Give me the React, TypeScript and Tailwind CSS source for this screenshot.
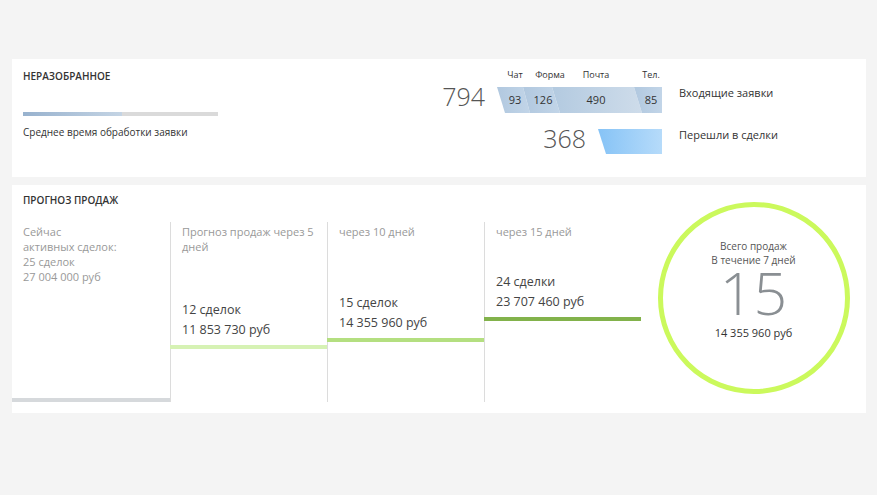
const columns = [
  {
    title: 'Прогноз продаж через 5 дней',
    deals: '12 сделок',
    sum: '11 853 730 руб',
    bar: 'bg-[#d6f2b4]',
    lift: 'h-[53px]'
  },
  {
    title: 'через 10 дней',
    deals: '15 сделок',
    sum: '14 355 960 руб',
    bar: 'bg-[#b4df80]',
    lift: 'h-[60px]'
  },
  {
    title: 'через 15 дней',
    deals: '24 сделки',
    sum: '23 707 460 руб',
    bar: 'bg-[#82b24b]',
    lift: 'h-[81px]'
  }
];

const channels = [
  { label: 'Чат', value: '93', left: 'left-[18px]', top: 'left-[18px]' },
  { label: 'Форма', value: '126', left: 'left-[46px]', top: 'left-[53px]' },
  { label: 'Почта', value: '490', left: 'left-[99px]', top: 'left-[99px]' },
  { label: 'Тел.', value: '85', left: 'left-[154px]', top: 'left-[154px]' }
];

function IncomingBar() {
  return (
    <div className="relative w-[165px] h-[40px]">
      {/* channel captions */}
      {channels.map((c) => (
        <span
          key={c.label}
          className={`absolute -top-[4px] -translate-x-1/2 text-[9px] leading-[12px] text-[#333] ${c.top}`}
        >
          {c.label}
        </span>
      ))}
      <svg width="165" height="26" viewBox="0 0 165 26" className="absolute left-0 top-[14px]">
        <defs>
          <linearGradient id="s1" x1="0" x2="1" y1="0" y2="0">
            <stop offset="0" stopColor="#b1c8df" />
            <stop offset="1" stopColor="#c2d5e8" />
          </linearGradient>
          <linearGradient id="s3" x1="0" x2="1" y1="0" y2="0">
            <stop offset="0" stopColor="#b3cae0" />
            <stop offset="1" stopColor="#cedcea" />
          </linearGradient>
        </defs>
        <polygon points="0,0 26,0 33,26 8,26" fill="url(#s1)" />
        <polygon points="26,0 55,0 63,26 33,26" fill="url(#s1)" />
        <polygon points="55,0 137,0 145,26 63,26" fill="url(#s3)" />
        <polygon points="137,0 165,0 165,26 145,26" fill="url(#s1)" />
      </svg>
      {channels.map((c) => (
        <span
          key={c.value}
          className={`absolute top-[20px] -translate-x-1/2 text-[11px] leading-[14px] text-[#333] ${c.left}`}
        >
          {c.value}
        </span>
      ))}
    </div>
  );
}

function DealsBar() {
  return (
    <svg width="64" height="25" viewBox="0 0 64 25" className="shrink-0">
      <defs>
        <linearGradient id="d1" x1="0" x2="1" y1="0" y2="0">
          <stop offset="0" stopColor="#86c3f6" />
          <stop offset="1" stopColor="#b6dbfa" />
        </linearGradient>
      </defs>
      <polygon points="0,0 64,0 64,25 8,25" fill="url(#d1)" />
    </svg>
  );
}

export default function App() {
  return (
    <div
      className="min-h-screen bg-[#f4f4f4] pt-[59px] pl-3 pr-[11px] pb-8"
      style={{ fontFamily: '"Open Sans", "Noto Sans", sans-serif' }}
    >
      {/* Unsorted leads */}
      <div className="flex h-[118px] bg-white">
        <div className="w-[206px] px-[11px] pt-[10px]">
          <h2 className="text-[10px] leading-[14px] font-semibold text-[#333] uppercase">Неразобранное</h2>
          <div className="mt-[29px] flex h-[4px] w-[195px] bg-[#dadada]">
            <div className="w-[99px] bg-gradient-to-r from-[#98b2ce] to-[#c4d4e4]" />
          </div>
          <p className="mt-[10px] text-[10px] leading-[13px] text-[#333]">Среднее время обработки заявки</p>
        </div>

        <div className="flex-1 pt-[14px]">
          <div className="flex items-end justify-end">
            <span className="mb-[2px] mr-[12px] text-[25px] leading-[30px] font-light text-[#555]">794</span>
            <IncomingBar />
            <span className="mb-[13px] ml-[17px] w-[187px] text-[11px] leading-[14px] text-[#333]">Входящие заявки</span>
          </div>
          <div className="mt-[16px] flex items-start justify-end">
            <span className="-mt-[6px] mr-[12px] text-[25px] leading-[30px] font-light text-[#555]">368</span>
            <DealsBar />
            <span className="-mt-px ml-[17px] w-[187px] text-[11px] leading-[14px] text-[#333]">Перешли в сделки</span>
          </div>
        </div>
      </div>

      {/* Sales forecast */}
      <div className="mt-[8px] bg-white pb-[11px]">
        <h2 className="px-[11px] pt-[8px] pb-[15px] text-[10px] leading-[14px] font-semibold text-[#333] uppercase">
          Прогноз продаж
        </h2>
        <div className="flex h-[180px]">
          <div className="flex w-[158px] flex-col">
            <div className="flex-1 px-[11px] pt-[2px] text-[11px] leading-[15px] text-[#999]">
              <p>Сейчас</p>
              <p>активных сделок:</p>
              <p>25 сделок</p>
              <p>27 004 000 руб</p>
            </div>
            <div className="h-[4px] bg-[#d6d9dc]" />
          </div>

          {columns.map((col) => (
            <div key={col.title} className="flex w-[157px] flex-col border-l border-[#dcdcdc]">
              <p className="px-[11px] pt-[2px] text-[11px] leading-[15px] text-[#999]">{col.title}</p>
              <div className="flex-1" />
              <div className="px-[11px] text-[12.5px] leading-[20px] text-[#444]">
                <p>{col.deals}</p>
                <p>{col.sum}</p>
              </div>
              <div className={`mt-[5px] h-[4px] -ml-px ${col.bar}`} />
              <div className={col.lift} />
            </div>
          ))}

          <div className="flex flex-1 items-start justify-center">
            <div className="-mt-[20px] flex h-[192px] w-[192px] flex-col items-center rounded-full border-[5px] border-[#cbf95c] pt-[32px] text-center">
              <p className="text-[10px] leading-[14px] text-[#555]">Всего продаж</p>
              <p className="text-[10px] leading-[14px] text-[#555]">В течение 7 дней</p>
              <p className="text-[59px] leading-[50px] font-light text-[#8a8f93]">15</p>
              <p className="mt-[9px] text-[11px] leading-[14px] text-[#333]">14 355 960 руб</p>
            </div>
          </div>
        </div>
      </div>
    </div>
  );
}
